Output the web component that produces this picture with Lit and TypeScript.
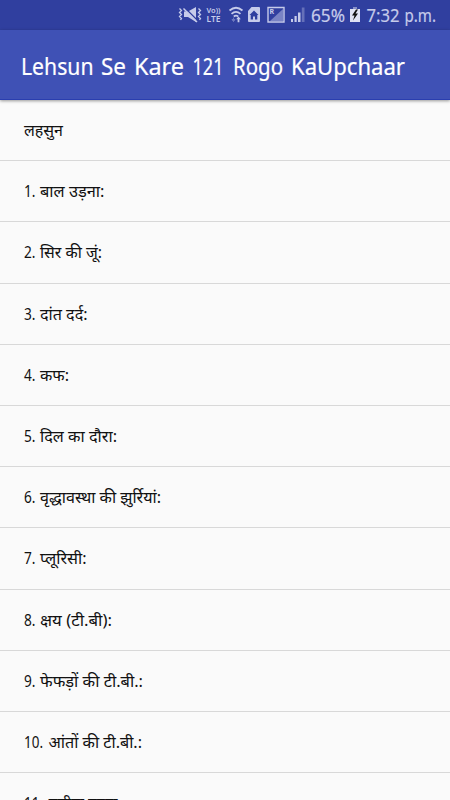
import { LitElement, html, css, svg } from "lit";
import { customElement } from "lit/decorators.js";

const rows: [string, string, number][] = [
  ["", "लहसुन", 39],
  ["1.", "बाल उड़ना:", 64.5],
  ["2.", "सिर की जूं:", 62],
  ["3.", "दांत दर्द:", 47.5],
  ["4.", "कफ:", 29],
  ["5.", "दिल का दौरा:", 77],
  ["6.", "वृद्धावस्था की झुर्रियां:", 121],
  ["7.", "प्लूरिसी:", 46.5],
  ["8.", "क्षय (टी.बी):", 72],
  ["9.", "फेफड़ों की टी.बी.:", 103],
  ["10.", "आंतों की टी.बी.:", 93.5],
  ["11.", "पसीना बहना", 69],
];

const title: [string, number, number][] = [
  ["Lehsun", 1, 72.5],
  ["Se", 81, 25],
  ["Kare", 114, 50],
  ["121", 172.5, 31],
  ["Rogo", 213, 50],
  ["KaUpchaar", 271, 114],
];

@customElement("status-bar")
class StatusBar extends LitElement {
  static styles = css`
    :host { display: block; height: 30px; background: #303f9f; }
    svg { display: block; }
    text { font-family: "Noto Sans", sans-serif; fill: #c6cbea; }
    .clock { font-size: 17.5px; stroke: #c6cbea; stroke-width: 0.2px; }
    .vo { font-size: 7.5px; font-weight: 600; }
    .lte { font-size: 9.5px; font-weight: 600; }
    .r { font-size: 7px; font-weight: 700; }
  `;
  render() {
    return html`<svg width="450" height="30" viewBox="0 0 450 30">
      <g fill="none" stroke="#c6cbea" stroke-width="1.3">
        <path d="M179.500 8.500l2 2-2 2 2 2-2 2 2 2-1 1.500M198.500 8.500l2 2-2 2 2 2-2 2 2 2-1 1.500" />
      </g>
      <path d="M184 11.500h4l8-4.500v15l-8-5h-4z" fill="#c6cbea" />
      <path d="M184.500 7.500L198 21" stroke="#303f9f" stroke-width="1.4" />
      <path d="M183.500 8.500L197 22" stroke="#c6cbea" stroke-width="1.5" />
      <text class="vo" x="206.500" y="13" textLength="14" lengthAdjust="spacingAndGlyphs">Vo))</text>
      <text class="lte" x="206.500" y="22" textLength="14" lengthAdjust="spacingAndGlyphs">LTE</text>
      <g fill="none" stroke="#c6cbea" stroke-width="1.7">
        <path d="M229.500 10.500q6.500-5.500 13 0M231.500 13.800q4.500-4 9 0M233.800 16.500q2.200-1.800 4.400 0" />
      </g>
      <path d="M233.500 17.500v4M232 19.500h3l-1.500 2z" stroke="#6c77be" fill="#6c77be" />
      <path d="M238.500 16.500l2.300 2.700h-1.400v3h-1.800v-3h-1.400z" fill="#c6cbea" />
      <path fill-rule="evenodd" fill="#c6cbea" d="M248 11l3.500-4h7.500q1 0 1 1v13q0 1-1 1h-10q-1 0-1-1zM254 10.500l-4.500 4.500h1.200v4.500h2.300v-3h2v3h2.300V15h1.200z" />
      <path d="M268 7.500h16v14.500h-16z" fill="none" stroke="#c6cbea" stroke-width="1.4" />
      <path d="M283 9v12h-13z" fill="#7983c4" />
      <text class="r" x="269.500" y="14">R</text>
      <path d="M291 19h2v3h-2zM294.500 16h2.200v6h-2.200zM298 12.500h2.500V22H298z" fill="#c6cbea" />
      <path d="M301.800 7.500h2.700v14.500h-2.700z" fill="#6570b9" />
      <text class="clock" x="311" y="22" textLength="34" lengthAdjust="spacingAndGlyphs">65%</text>
      <path d="M353 7h4v2h3v13h-10V9h3z" fill="#dfe2f3" />
      <path d="M353 7h4v2h-4z" fill="#8790c9" />
      <path d="M356 9.500l-4 6h2.500l-1.500 5 5-7h-2.500l2.500-4z" fill="#111" />
      <text class="clock" x="366.500" y="22" textLength="33" lengthAdjust="spacingAndGlyphs">7:32</text>
      <text class="clock" x="404.500" y="22" textLength="31.500" lengthAdjust="spacingAndGlyphs">p.m.</text>
    </svg>`;
  }
}

@customElement("app-root")
class AppRoot extends LitElement {
  static styles = css`
    :host { display: block; height: 800px; overflow: hidden; background: #fafafa; font-family: "Noto Sans", sans-serif; }
    .bar { height: 70px; background: #3f51b5; display: flex; align-items: center; padding-left: 20px; position: relative;
      box-shadow: 0 1px 3px rgba(0,0,0,.4); box-sizing: border-box; border-bottom: 1px solid #2a3eaf; }
    .bar text { fill: #fff; stroke: #fff; stroke-width: 0.2px; stroke-linejoin: round; font-size: 23px; }
    .row { height: 61.200px; box-sizing: border-box; border-bottom: 1px solid #d8d8d8; display: flex; align-items: center; padding-left: 24px; }
    .row text { font-size: 16px; fill: #111; }
    svg { display: block; overflow: visible; }
  `;
  render() {
    return html`<status-bar></status-bar>
      <header class="bar"><svg width="386" height="40">
        ${title.map(([word, x, w]) => svg`<text x=${x} y="30.300" textLength=${w} lengthAdjust="spacingAndGlyphs">${word}</text>`)}
      </svg></header>
      <main>${rows.map(([n, t, w]) => {
        const x = n === "" ? 0 : n.length > 2 ? 24.5 : 16;
        return html`<div class="row"><svg width="200" height="30">
          ${n ? svg`<text x="0" y="21" textLength=${n.length > 2 ? 19 : 11.5} lengthAdjust="spacingAndGlyphs">${n}</text>` : ""}
          <text x=${x} y="21" textLength=${w} lengthAdjust="spacingAndGlyphs">${t}</text></svg></div>`;
      })}</main>`;
  }
}
